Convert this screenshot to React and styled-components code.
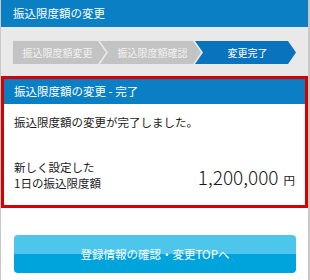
import React from 'react';
import styled, { createGlobalStyle } from 'styled-components';

const GlobalStyle = createGlobalStyle`
  html, body {
    margin: 0;
    padding: 0;
    background: #fff;
  }
  body {
    font-family: "Noto Sans CJK JP", "Noto Sans", sans-serif;
  }
`;

const steps = [
  { label: '振込限度額変更', active: false },
  { label: '振込限度額確認', active: false },
  { label: '変更完了', active: true },
];

const App = () => {
  return (
    <>
      <GlobalStyle />
      <Frame>
        <PageHeader>振込限度額の変更</PageHeader>
        <StepArea>
          <StepList>
            {steps.map((s, i) => (
              <Step key={i} $active={s.active} $first={i === 0}>
                {s.label}
              </Step>
            ))}
          </StepList>
        </StepArea>
        <ResultBox>
          <BoxHeader>振込限度額の変更 - 完了</BoxHeader>
          <BoxBody>
            <Message>振込限度額の変更が完了しました。</Message>
            <AmountRow>
              <AmountLabel>
                新しく設定した
                <br />
                1日の振込限度額
              </AmountLabel>
              <Amount>
                1,200,000<Unit>円</Unit>
              </Amount>
            </AmountRow>
          </BoxBody>
        </ResultBox>
        <Footer>
          <TopButton>登録情報の確認・変更TOPへ</TopButton>
        </Footer>
      </Frame>
    </>
  );
};

export default App;

const Frame = styled.div`
  width: 310px;
  height: 280px;
  box-sizing: border-box;
  border-left: 1px solid #c8c8c8;
  border-right: 2px solid #c8c8c8;
  display: flex;
  flex-direction: column;
  overflow: hidden;
`;

const PageHeader = styled.div`
  height: 27px;
  background: #0a7fc3;
  color: #fff;
  font-size: 11.5px;
  line-height: 27px;
  margin: 0 -2px 0 -1px;
  padding-left: 13px;
`;

const StepArea = styled.div`
  background: #e9e9e9;
  height: 49px;
  padding: 14px 12px 0 12px;
  box-sizing: border-box;
`;

const StepList = styled.div`
  display: flex;
  height: 23px;
`;

const Step = styled.div`
  flex: 1;
  margin-left: ${(p) => (p.$first ? '0' : '-6px')};
  height: 23px;
  line-height: 23px;
  font-size: 10px;
  text-align: center;
  color: ${(p) => (p.$active ? '#fff' : '#f2f2f2')};
  background: ${(p) => (p.$active ? '#0a73bd' : '#c3c3c3')};
  clip-path: ${(p) =>
    p.$first
      ? 'polygon(0 0, calc(100% - 8px) 0, 100% 50%, calc(100% - 8px) 100%, 0 100%)'
      : 'polygon(0 0, calc(100% - 8px) 0, 100% 50%, calc(100% - 8px) 100%, 0 100%, 8px 50%)'};
  padding-left: ${(p) => (p.$first ? '0' : '8px')};
  padding-right: 4px;
`;

const ResultBox = styled.div`
  border: 3px solid #d70000;
  height: 132px;
  box-sizing: border-box;
  display: flex;
  flex-direction: column;
  background: #fff;
`;

const BoxHeader = styled.div`
  background: #0a7fc3;
  color: #fff;
  font-size: 11.5px;
  height: 25px;
  line-height: 25px;
  padding-left: 10px;
`;

const BoxBody = styled.div`
  flex: 1;
  padding: 9px 8px 0 10px;
  color: #1a1a1a;
  display: flex;
  flex-direction: column;
`;

const Message = styled.div`
  font-size: 11.5px;
  line-height: 18px;
`;

const AmountRow = styled.div`
  margin-top: 28px;
  display: flex;
  align-items: flex-end;
  justify-content: space-between;
`;

const AmountLabel = styled.div`
  font-size: 11.5px;
  line-height: 16px;
`;

const Amount = styled.div`
  font-size: 19px;
  line-height: 22px;
  padding-right: 2px;
  font-weight: 300;
`;

const Unit = styled.span`
  font-size: 11.5px;
  margin-left: 5px;
  font-weight: 400;
`;

const Footer = styled.div`
  flex: 1;
  padding: 27px 12px 0 13px;
  background: #fff;
`;

const TopButton = styled.button`
  display: block;
  width: 100%;
  height: 38px;
  border: none;
  border-radius: 4px;
  background: linear-gradient(to bottom, #4ec5ea 0%, #4ec5ea 50%, #00a4dc 50%, #00a4dc 100%);
  color: #fff;
  font-family: "Noto Sans CJK JP", "Noto Sans", sans-serif;
  font-size: 11.5px;
  padding: 0;
`;
